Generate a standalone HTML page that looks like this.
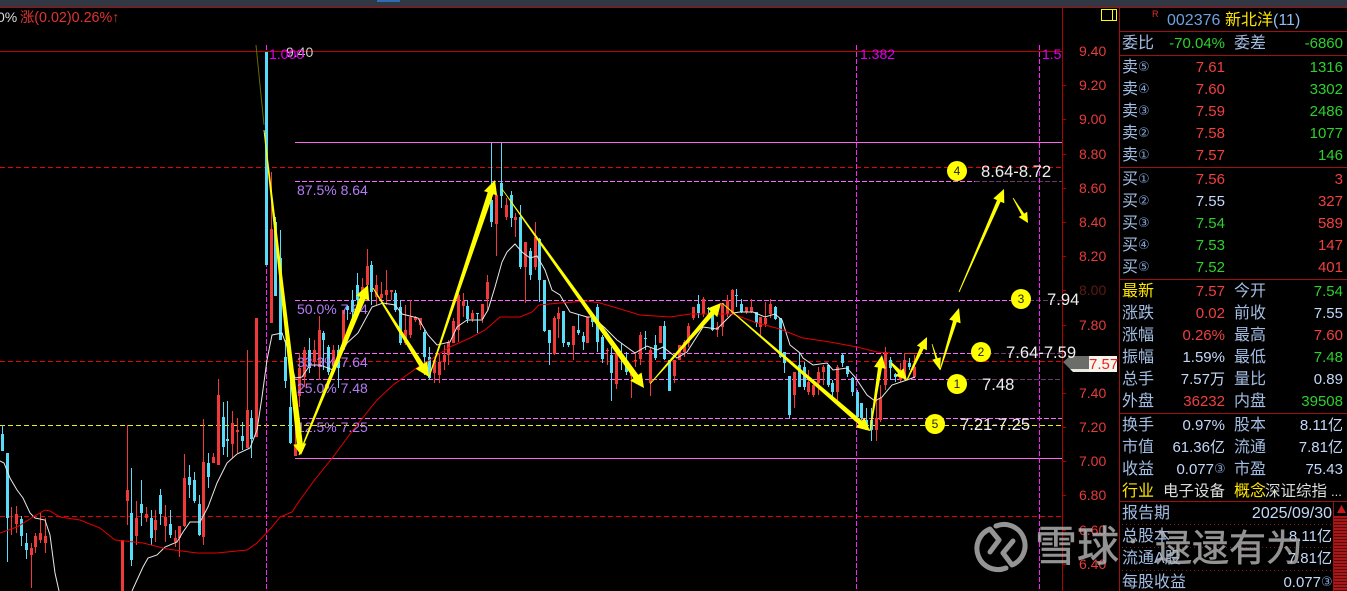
<!DOCTYPE html>
<html lang="zh"><head><meta charset="utf-8"><title>002376 新北洋</title>
<style>
html,body{margin:0;padding:0;background:#000;width:1347px;height:591px;overflow:hidden}
svg{display:block;position:absolute;left:0;top:0}
text{font-family:"Liberation Sans","Noto Sans CJK SC",sans-serif;font-size:15px}
.a{fill:#e83c3c;font-size:14px}
.p{fill:#b47cf5;font-size:14px}
.m{fill:#e000f0;font-size:14px}
.w{fill:#eee;font-size:16.6px}
.n{fill:#222;font-size:12px;text-anchor:middle}
.l{fill:#a3bde3;font-size:16px}
.y{fill:#ffe600;font-size:16px}
.e{text-anchor:end}
.r{fill:#f04040}
.g{fill:#2ed02e}
.b{fill:#c4d8f8}
.c{fill:#7f9fd0;font-size:13px;font-family:"DejaVu Sans",sans-serif}
</style></head><body>
<svg width="1347" height="591" viewBox="0 0 1347 591" xmlns="http://www.w3.org/2000/svg">
<rect width="1347" height="591" fill="#000"/>
<rect width="1347" height="7" fill="#323843"/>
<rect x="377" y="0" width="23" height="2" fill="#2f6cb0"/>
<rect y="7" width="1347" height="1" fill="#a01010"/>

<g shape-rendering="crispEdges" fill="none">
<path d="M0 51.5H1062" stroke="#c00000"/>
<path d="M295 142.5H1062M295 458.5H1062" stroke="#ff66ee"/>
<path d="M0 167.5H1062M0 361.5H1062M0 516.5H1062" stroke="#e80000" stroke-dasharray="5 3"/>
<path d="M295 181.5H975M295 300.5H1015M295 353.5H973M295 379.5H950M295 418.5H1062" stroke="#ff66ff" stroke-dasharray="5 2"/>
<path d="M975 181.5H1062M1015 300.5H1062M973 353.5H1062M950 379.5H1062" stroke="#6a3a6a" stroke-dasharray="5 2"/>
<path d="M0 425.5H1062" stroke="#f0f000" stroke-dasharray="5 3"/>
<path d="M266.5 45V591M856.5 45V591M1039.5 45V591" stroke="#ff20ff" stroke-dasharray="5 2"/>
</g>

<g shape-rendering="crispEdges" fill="none">
<!-- cyan wicks -->
<path stroke="#58dcf8" d="M2.5 425V451M7.5 453V562M21.5 516V546M26.5 533V559M131.5 468V566M141.5 480V526M151.5 510V545M160.5 489V525M170.5 510V538M189.5 465V498M194.5 472V503M199.5 495V536M208.5 453V488M223.5 402V455M227.5 401V457M242.5 422V450M251.5 410V458M275.5 217V296M280.5 230V340M285.5 340V388M290.5 380V444M309.5 338V373M323.5 331V370M328.5 345V375M338.5 345V388M347.5 305V320M352.5 290V325M357.5 273V310M371.5 261V305M395.5 290V312M400.5 300V345M424.5 330V375M429.5 347V380M467.5 300V323M477.5 313V333M491.5 143V227M501.5 143V208M511.5 191V227M520.5 205V269M530.5 248V280M539.5 238V302M544.5 280V332M549.5 330V365M563.5 311V347M568.5 342V347M578.5 314V335M583.5 332V350M592.5 315V327M597.5 304V352M602.5 335V363M611.5 347V401M621.5 343V370M626.5 352V375M645.5 331V350M655.5 335V360M664.5 321V360M698.5 295V318M708.5 307V315M712.5 307V331M736.5 289V307M741.5 299V313M756.5 312V327M775.5 306V320M780.5 318V358M784.5 352V373M789.5 376V418M799.5 353V385M804.5 362V390M828.5 365V387M832.5 380V397M842.5 353V367M847.5 366V377M852.5 377V396M857.5 390V417M861.5 403V420M866.5 408V430M871.5 408V441M890.5 357V380M895.5 373V382M909.5 358V370"/>
<!-- cyan bodies -->
<path stroke="#58dcf8" stroke-width="3" d="M2.5 434V451M7.5 453V518M21.5 519V536M26.5 543V550M131.5 513V560M141.5 504V513M151.5 518V538M160.5 495V514M170.5 524V535M189.5 477V485M194.5 480V501M199.5 504V535M208.5 463V477M223.5 417V447M227.5 439V441M242.5 436V441M251.5 418V439M266.5 52V265M275.5 222V296M280.5 258V340M285.5 357V381M290.5 407V443M309.5 350V368M323.5 333V340M328.5 347V372M338.5 350V368M347.5 306V310M352.5 300V312M357.5 285V300M371.5 265V292M395.5 293V310M400.5 307V343M424.5 332V357M429.5 357V378M467.5 306V319M477.5 313V314M491.5 200V222M501.5 183V196M511.5 195V218M520.5 217V267M530.5 251V275M539.5 239V280M544.5 280V331M549.5 330V343M563.5 311V343M568.5 342V345M578.5 330V333M583.5 336V342M592.5 318V322M597.5 307V342M602.5 337V359M611.5 355V373M626.5 362V372M645.5 338V339M655.5 345V358M664.5 326V359M669.5 360V391M698.5 304V313M708.5 308V309M712.5 310V330M736.5 295V296M741.5 304V312M756.5 312V323M775.5 307V319M780.5 318V357M784.5 352V363M789.5 376V415M799.5 365V387M804.5 367V387M828.5 365V385M832.5 383V392M842.5 355V363M847.5 366V374M852.5 378V392M857.5 392V417M861.5 403V418M866.5 420V430M871.5 420V430M890.5 360V368M895.5 374V377M909.5 363V367"/>
<!-- red wicks -->
<path stroke="#f03a3a" d="M11.5 507V535M16.5 506V533M31.5 543V588M35.5 533V553M40.5 513V543M45.5 518V553M127.5 425V525M136.5 501V545M146.5 507V522M155.5 510V542M165.5 505V542M175.5 530V547M179.5 526V557M184.5 454V527M203.5 419V545M213.5 453V463M218.5 379V465M232.5 411V458M237.5 418V453M247.5 350V448M271.5 172V323M295.5 402V456M299.5 353V407M304.5 347V387M314.5 340V365M319.5 316V380M333.5 345V370M343.5 310V350M362.5 278V300M367.5 249V300M376.5 275V305M381.5 282V300M386.5 270V305M391.5 290V300M405.5 305V345M410.5 300V338M415.5 316V322M420.5 318V330M434.5 360V383M439.5 353V383M444.5 345V370M448.5 340V365M453.5 318V343M458.5 293V342M463.5 293V317M472.5 310V322M482.5 304V323M487.5 275V310M496.5 195V256M506.5 198V220M515.5 213V237M525.5 242V303M535.5 222V270M554.5 316V355M558.5 307V338M573.5 326V360M587.5 317V343M607.5 348V365M616.5 352V389M631.5 370V398M635.5 353V367M640.5 332V365M650.5 348V396M660.5 326V343M674.5 360V383M684.5 340V357M688.5 323V347M693.5 307V320M703.5 297V317M717.5 322V337M722.5 303V336M727.5 295V317M732.5 289V315M746.5 307V314M751.5 299V313M760.5 317V337M765.5 302V327M770.5 299V318M794.5 372V408M808.5 370V395M813.5 382V397M818.5 367V395M823.5 365V385M837.5 365V400M876.5 390V441M880.5 385V422M885.5 347V390M900.5 363V382M904.5 353V378M914.5 355V378M904 353.5H918"/>
<!-- red bodies -->
<path stroke="#f03a3a" stroke-width="3" d="M16.5 514V524M31.5 548V555M35.5 536V547M40.5 533V540M45.5 536V543M122.5 540V591M127.5 490V501M136.5 518V536M146.5 514V518M155.5 520V530M165.5 517V526M175.5 538V542M179.5 526V538M184.5 478V526M203.5 462V537M213.5 457V463M218.5 395V465M232.5 423V444M237.5 430V432M247.5 410V448M256.5 318V437M271.5 229V323M295.5 444V456M299.5 368V396M304.5 350V377M314.5 350V362M319.5 330V367M333.5 350V365M343.5 310V350M362.5 287V300M367.5 266V285M376.5 285V297M381.5 294V298M386.5 290V295M391.5 290V292M405.5 330V343M410.5 317V335M415.5 317V320M420.5 318V325M434.5 360V373M439.5 362V375M444.5 355V362M448.5 342V355M453.5 321V343M458.5 295V330M463.5 301V306M472.5 313V319M482.5 304V319M487.5 282V299M496.5 195V224M506.5 205V217M515.5 217V220M525.5 242V267M535.5 237V267M554.5 318V354M558.5 313V319M573.5 326V345M587.5 317V343M607.5 350V351M616.5 353V384M631.5 372V376M635.5 360V361M640.5 335V359M650.5 350V383M660.5 326V343M674.5 360V376M679.5 345V360M684.5 342V352M688.5 326V343M693.5 307V318M703.5 299V314M717.5 327V330M722.5 303V327M727.5 300V314M732.5 290V313M746.5 307V312M751.5 307V312M760.5 317V327M765.5 318V324M770.5 304V314M794.5 372V395M808.5 382V392M813.5 385V395M818.5 372V383M823.5 367V372M837.5 367V392M876.5 418V430M880.5 398V420M885.5 352V385M900.5 373V380M904.5 360V378M914.5 367V377"/>
</g>

<!-- MA lines -->
<polyline fill="none" stroke="#e8e8e8" stroke-width="1" points="0,461 4,463 10,478 17,490 23,498 30,513 35,518 45,520 50,535 55,573 59,591"/>
<polyline fill="none" stroke="#e8e8e8" stroke-width="1" points="132,591 137,580 143,567 148,558 157,555 165,547 177,542 183,532 190,522 200,522 208,507 217,483 227,463 237,454 250,448 257,430 262,397 267,360 272,335 282,333 287,347 295,378 302,377 310,365 320,365 333,370 347,343 358,333 365,320 372,307 383,303 395,305 402,314 418,318 428,335 437,345 450,342 457,327 467,320 482,320 488,310 495,287 502,262 507,252 515,244 522,252 530,258 537,256 545,270 552,290 560,295 570,312 587,317 593,317 605,328 617,340 635,353 647,346 657,350 663,347 677,358 687,352 703,327 717,329 733,313 740,312 753,312 765,317 775,314 782,320 790,345 800,353 803,358 813,365 827,363 833,370 847,368 855,377 867,395 875,401 882,397 892,385 907,380 915,377"/>
<polyline fill="none" stroke="#e60000" stroke-width="1" points="0,533 17,527 33,517 45,510 50,511 60,517 80,520 100,528 115,540 143,543 167,549 197,553 217,553 247,550 257,543 272,527 280,517 292,512 300,500 313,482 333,457 353,430 377,400 393,385 418,367 433,358 450,347 470,338 485,330 500,317 520,317 532,312 539,305 560,303 587,301 600,303 617,308 640,315 670,317 690,314 733,314 757,323 780,329 800,337 803,338 830,342 857,347 877,352 890,353"/>

<!-- axis -->
<path shape-rendering="crispEdges" fill="none" stroke="#b00000" d="M1062.5 8V591M1062 85.5h4M1062 119.5h4M1062 154.5h4M1062 188.5h4M1062 222.5h4M1062 256.5h4M1062 290.5h4M1062 325.5h4M1062 393.5h4M1062 427.5h4M1062 461.5h4M1062 495.5h4M1062 530.5h4M1062 564.5h4"/>
<g class="axis">
<text class="a" x="1079" y="56">9.40</text>
<text class="a" x="1079" y="90">9.20</text>
<text class="a" x="1079" y="124">9.00</text>
<text class="a" x="1079" y="159">8.80</text>
<text class="a" x="1079" y="193">8.60</text>
<text class="a" x="1079" y="227">8.40</text>
<text class="a" x="1079" y="261">8.20</text>
<text class="a" x="1079" y="295" style="fill:#5e1a14">8.00</text>
<text class="a" x="1079" y="330">7.80</text>
<text class="a" x="1079" y="398">7.40</text>
<text class="a" x="1079" y="432">7.20</text>
<text class="a" x="1079" y="466">7.00</text>
<text class="a" x="1079" y="500">6.80</text>
<text class="a" x="1079" y="535">6.60</text>
<text class="a" x="1079" y="569">6.40</text>
</g>

<!-- price tag -->
<rect x="1088" y="356" width="29" height="16" fill="#f4f6ee"/>
<polygon points="1063,363 1070,369 1073,372 1089,372 1089,369 1070,369" fill="#e8eae0"/>
<polygon points="1063,362 1070,356 1089,356 1089,369 1070,369" fill="#6b6d68"/>
<text x="1089" y="369" style="font-size:15px;fill:#f02020">7.57</text>

<!-- chart labels -->
<text x="-3" y="22" style="font-size:14px;fill:#ddd">0%</text>
<text x="20" y="22" style="font-size:14.3px;fill:#e03434">涨(0.02)0.26%↑</text>
<text x="286" y="57" style="font-size:14px;fill:#ccc">9.40</text>
<text class="m" x="269" y="59">1.000</text>
<text class="m" x="860" y="59">1.382</text>
<text class="m" x="1042" y="59">1.5</text>
<text class="p" x="297" y="195">87.5% 8.64</text>
<text class="p" x="297" y="314">50.0% 7.94</text>
<text class="p" x="297" y="367">33.3% 7.64</text>
<text class="p" x="297" y="393">25.0% 7.48</text>
<text class="p" x="297" y="432">12.5% 7.25</text>

<!-- arrows -->
<g fill="#ffff00">
<path d="M256 45L264 125" stroke="#6b6b00" stroke-width="1" fill="none"/>
<polygon points="264.5,130 302.8,443.8 306.3,443.4 301,455 293.3,444.8 296.8,444.4 263.5,130"/>
<polygon points="299.5,455.2 365.5,299.1 369.2,300.6 368,285 356.2,295.4 359.9,296.9 298.5,454.8"/>
<polygon points="373.4,287.7 423.6,363.8 427.4,361.4 429,377 415.6,368.8 419.4,366.4 372.6,288.3"/>
<polygon points="429.5,377.2 493.3,194.3 497.1,195.5 495,180 483.9,191.1 487.7,192.3 428.5,376.8"/>
<polygon points="502.3,188.8 638.3,374.9 641.6,372.5 644,388 630.2,380.7 633.5,378.3 501.7,189.2"/>
<polygon points="650.3,384.3 714.3,314.4 717.3,317.1 721,303 707.5,308.5 710.5,311.2 649.7,383.7"/>
<polygon points="722.3,302.7 861.8,420.6 864.5,417.6 870,431 855.9,427.4 858.6,424.4 721.7,303.3"/>
<polygon points="870.5,431.1 882,368.1 885.9,368.7 882,355 874.1,366.9 878,367.5 869.5,430.9"/>
<polygon points="891.7,362.3 901,370.6 903.5,368.2 907,380 895.5,375.8 898,373.4 890.3,363.7"/>
<polygon points="907.5,380.2 923.7,348.7 926.9,350.2 927,337 916.9,345.6 920.1,347.1 906.5,379.8"/>
<polygon points="932.3,343.9 937.5,358.2 940.8,357.2 940,370 932.2,359.8 935.5,358.8 931.7,344.1"/>
<polygon points="940.5,370.1 956.8,322 960.6,323.2 959,308 949.2,319.6 953,320.8 939.5,369.9"/>
<polygon points="959.4,292.2 1000.6,201.7 1004.3,203.3 1004,189 993.3,198.5 997,200.1 958.6,291.8"/>
<polygon points="1013.3,197.8 1024.2,213.6 1027.2,211.8 1028,223 1018.6,217 1021.6,215.2 1012.7,198.2"/>
<circle cx="957" cy="171" r="10"/><circle cx="1021" cy="299" r="10"/><circle cx="981" cy="352" r="10"/><circle cx="957" cy="384" r="10"/><circle cx="935" cy="424" r="10"/>
</g>
<text class="n" x="957" y="175">4</text><text class="n" x="1021" y="303">3</text><text class="n" x="981" y="356">2</text><text class="n" x="957" y="388">1</text><text class="n" x="935" y="428">5</text>
<text class="w" x="981" y="177">8.64-8.72</text>
<text class="w" x="1047" y="305">7.94</text>
<text class="w" x="1006" y="358">7.64-7.59</text>
<text class="w" x="982" y="390">7.48</text>
<text class="w" x="960" y="430">7.21-7.25</text>

<!-- yellow box -->
<path shape-rendering="crispEdges" fill="none" stroke="#ffff00" d="M1101.5 9.5H1116.5V20.5H1101.5ZM1112.5 9.5V20.5"/>

<!-- side panel lines -->
<path shape-rendering="crispEdges" fill="none" stroke="#a01010" d="M1119.5 8V591M1120 31.5H1347M1120 55.5H1347M1120 167.5H1347M1120 279.5H1347M1120 413.5H1347M1120 501.5H1347M1333.5 502V591"/>
<path shape-rendering="crispEdges" fill="none" stroke="#901818" stroke-dasharray="1 3" d="M1122 524.5H1332M1122 547.5H1332M1122 570.5H1332"/>
<defs><pattern id="st" width="14" height="3" patternUnits="userSpaceOnUse"><rect width="14" height="2" fill="#a81818"/><rect y="2" width="14" height="1" fill="#5a0808"/></pattern></defs>
<rect x="1334" y="516" width="13" height="75" fill="url(#st)"/>
<polygon points="1337,513 1346,513 1341.5,505" fill="#c81818"/>

<!-- header -->
<text x="1152" y="17" style="font-size:9px;fill:#e03030">R</text>
<text x="1167" y="25" style="font-size:16px;fill:#6fa0e0">002376</text>
<text x="1225" y="25" class="y">新北洋</text>
<text x="1273" y="25" style="font-size:16px;fill:#90bcf0">(11)</text>

<!-- order rows -->
<text class="l" x="1122" y="48">委比</text><text class="g e" x="1225" y="48">-70.04%</text><text class="l" x="1234" y="48">委差</text><text class="g e" x="1343" y="48">-6860</text>

<text class="l" x="1122" y="72">卖</text><text class="c" x="1138" y="71">⑤</text><text class="r e" x="1225" y="72">7.61</text><text class="g e" x="1343" y="72">1316</text>
<text class="l" x="1122" y="94">卖</text><text class="c" x="1138" y="93">④</text><text class="r e" x="1225" y="94">7.60</text><text class="g e" x="1343" y="94">3302</text>
<text class="l" x="1122" y="116">卖</text><text class="c" x="1138" y="115">③</text><text class="r e" x="1225" y="116">7.59</text><text class="g e" x="1343" y="116">2486</text>
<text class="l" x="1122" y="138">卖</text><text class="c" x="1138" y="137">②</text><text class="r e" x="1225" y="138">7.58</text><text class="g e" x="1343" y="138">1077</text>
<text class="l" x="1122" y="160">卖</text><text class="c" x="1138" y="159">①</text><text class="r e" x="1225" y="160">7.57</text><text class="g e" x="1343" y="160">146</text>

<text class="l" x="1122" y="184">买</text><text class="c" x="1138" y="183">①</text><text class="r e" x="1225" y="184">7.56</text><text class="r e" x="1343" y="184">3</text>
<text class="l" x="1122" y="206">买</text><text class="c" x="1138" y="205">②</text><text class="b e" x="1225" y="206">7.55</text><text class="r e" x="1343" y="206">327</text>
<text class="l" x="1122" y="228">买</text><text class="c" x="1138" y="227">③</text><text class="g e" x="1225" y="228">7.54</text><text class="r e" x="1343" y="228">589</text>
<text class="l" x="1122" y="250">买</text><text class="c" x="1138" y="249">④</text><text class="g e" x="1225" y="250">7.53</text><text class="r e" x="1343" y="250">147</text>
<text class="l" x="1122" y="272">买</text><text class="c" x="1138" y="271">⑤</text><text class="g e" x="1225" y="272">7.52</text><text class="r e" x="1343" y="272">401</text>

<text class="y" x="1122" y="296">最新</text><text class="r e" x="1225" y="296">7.57</text><text class="l" x="1234" y="296">今开</text><text class="g e" x="1343" y="296">7.54</text>
<text class="l" x="1122" y="318">涨跌</text><text class="r e" x="1225" y="318">0.02</text><text class="l" x="1234" y="318">前收</text><text class="b e" x="1343" y="318">7.55</text>
<text class="l" x="1122" y="340">涨幅</text><text class="r e" x="1225" y="340">0.26%</text><text class="l" x="1234" y="340">最高</text><text class="r e" x="1343" y="340">7.60</text>
<text class="l" x="1122" y="362">振幅</text><text class="b e" x="1225" y="362">1.59%</text><text class="l" x="1234" y="362">最低</text><text class="g e" x="1343" y="362">7.48</text>
<text class="l" x="1122" y="384">总手</text><text class="b e" x="1225" y="384">7.57万</text><text class="l" x="1234" y="384">量比</text><text class="b e" x="1343" y="384">0.89</text>
<text class="l" x="1122" y="406">外盘</text><text class="r e" x="1225" y="406">36232</text><text class="l" x="1234" y="406">内盘</text><text class="g e" x="1343" y="406">39508</text>

<text class="l" x="1122" y="430">换手</text><text class="b e" x="1225" y="430">0.97%</text><text class="l" x="1234" y="430">股本</text><text class="b e" x="1343" y="430">8.11亿</text>
<text class="l" x="1122" y="452">市值</text><text class="b e" x="1225" y="452">61.36亿</text><text class="l" x="1234" y="452">流通</text><text class="b e" x="1343" y="452">7.81亿</text>
<text class="l" x="1122" y="474">收益</text><text class="b e" x="1214" y="474">0.077</text><text class="c" x="1214" y="473">③</text><text class="l" x="1234" y="474">市盈</text><text class="b e" x="1343" y="474">75.43</text>
<text class="y" x="1122" y="496">行业</text><text x="1163" y="496" style="font-size:15.5px;fill:#ddd">电子设备</text><text class="y" x="1234" y="496">概念</text><text x="1265" y="496" style="font-size:15.5px;fill:#ddd">深证综指</text><text x="1331" y="496" style="font-size:13px;fill:#ddd">...</text>

<text class="l" x="1122" y="518">报告期</text><text class="b e" x="1332" y="518" style="font-size:16px">2025/09/30</text>
<text class="l" x="1122" y="541">总股本</text><text class="b e" x="1332" y="541">8.11亿</text>
<text class="l" x="1122" y="563">流通A股</text><text class="b e" x="1332" y="563">7.81亿</text>
<text class="l" x="1122" y="587">每股收益</text><text class="b e" x="1321" y="587">0.077</text><text class="c" x="1321" y="586">③</text>

<!-- watermark -->
<g opacity=".82">
<path fill="none" stroke="#b4b4b4" stroke-width="5" stroke-linecap="round" stroke-linejoin="round" d="M1006 568A21 21 0 0 1 990 529L999 540L990 552M996 526A21 21 0 0 1 1012 565L1003 553L1013 541"/>
<text x="1035" y="561" style="font-size:42px;fill:#b4b4b4;stroke:#b4b4b4;stroke-width:.6">雪球</text>
<circle cx="1133" cy="541" r="2.5" fill="#b4b4b4"/>
<text x="1155" y="561" style="font-size:37px;fill:#b4b4b4;stroke:#b4b4b4;stroke-width:.6">逯逯有为</text>
</g>
</svg>
</body></html>
